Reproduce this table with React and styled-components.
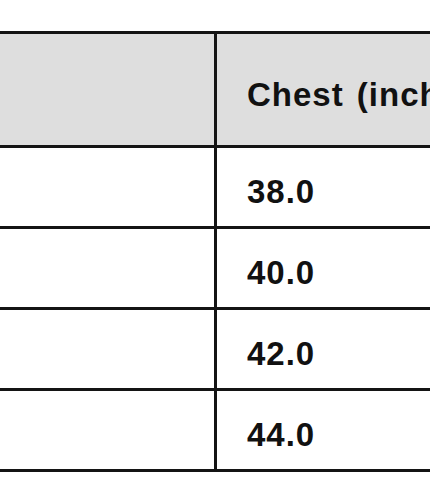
import React from 'react';
import styled, { createGlobalStyle } from 'styled-components';

const lineColor = '#141414';

const rows = ['38.0', '40.0', '42.0', '44.0'];

const GlobalStyle = createGlobalStyle`
  html, body {
    margin: 0;
    background: #fff;
  }
  body {
    font-family: "Liberation Sans", Arial, sans-serif;
    overflow: hidden;
  }
`;

const App = () => {
  return (
    <Page>
      <GlobalStyle />
      <SizeTable>
        <Row header>
          <Cell header />
          <Cell header>Chest (inches)</Cell>
        </Row>
        {rows.map(value => (
          <Row key={value}>
            <Cell />
            <Cell>{value}</Cell>
          </Row>
        ))}
      </SizeTable>
    </Page>
  );
};

export default App;

const Page = styled.div`
  width: 430px;
  height: 502px;
  padding-top: 31px;
  box-sizing: border-box;
  overflow: hidden;
`;

const SizeTable = styled.div`
  width: 700px;
  border-top: 3px solid ${lineColor};
`;

const Row = styled.div`
  display: grid;
  grid-template-columns: 217px 1fr;
  height: ${props => (props.header ? '111px' : '78px')};
  border-bottom: 3px solid ${lineColor};
  background: ${props => (props.header ? '#dedede' : '#fff')};
`;

const Cell = styled.div`
  display: flex;
  align-items: center;
  padding: 10px 0 0 30px;
  box-sizing: border-box;
  font-size: 33px;
  font-weight: bold;
  letter-spacing: 1px;
  word-spacing: 3px;
  color: #111;
  white-space: nowrap;

  &:first-child {
    border-right: 3px solid ${lineColor};
  }
`;
